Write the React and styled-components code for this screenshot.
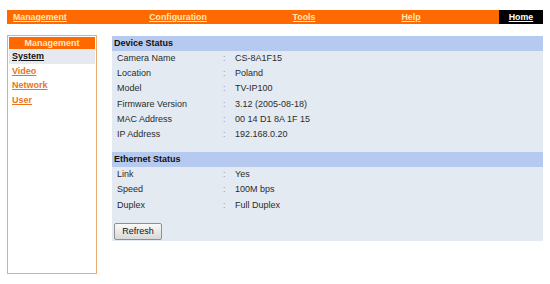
import React from "react";
import styled, { createGlobalStyle } from "styled-components";

const Global = createGlobalStyle`
  html, body { margin: 0; padding: 0; background: #fff; }
  body { font-family: "Liberation Sans", Arial, sans-serif; font-size: 9px; color: #333; }
`;

const Page = styled.div`
  width: 536px;
  padding: 10px 7px 0 7px;
`;

const TopBar = styled.nav`
  display: grid;
  grid-template-columns: 100px 142px 110px 104px 36px 44px;
  height: 14px;
  background: #ff6a00;
`;

const TopCell = styled.div`
  display: flex;
  align-items: center;
  justify-content: ${(p) => (p.$left ? "flex-start" : "center")};
  padding-left: ${(p) => (p.$left ? "6px" : "0")};
  background: ${(p) => (p.$dark ? "#000" : "transparent")};
`;

const TopLink = styled.a`
  font-weight: bold;
  font-size: 8.8px;
  color: ${(p) => (p.$dark ? "#fff" : "#ffe8b0")};
  text-decoration: underline;
  line-height: 14px;
`;

const Content = styled.div`
  display: flex;
  gap: 15px;
  margin-top: 11px;
`;

const Sidebar = styled.aside`
  box-sizing: border-box;
  width: 90px;
  height: 239px;
  border: 1px solid #e8ad72;
  padding: 1px;
`;

const SideHead = styled.div`
  background: #ff6a00;
  color: #ffe8c8;
  font-weight: bold;
  text-align: center;
  height: 12px;
  line-height: 12px;
`;

const SideItem = styled.a`
  display: block;
  height: 14.6px;
  line-height: 14.6px;
  padding-left: 3px;
  font-weight: bold;
  text-decoration: underline;
  color: ${(p) => (p.$active ? "#111" : "#e8741e")};
  background: ${(p) => (p.$active ? "#e6eaf0" : "transparent")};
`;

const Main = styled.main`
  width: 431px;
  margin-top: 1px;
  background: #e4eaf2;
  align-self: flex-start;
  padding-bottom: 1px;
`;

const SectionHead = styled.div`
  background: #b6c9ee;
  color: #111;
  font-weight: bold;
  height: 15px;
  line-height: 15px;
  padding-left: 2px;
`;

const Row = styled.div`
  display: grid;
  grid-template-columns: 106px 12px 1fr;
  height: 15.2px;
  line-height: 15.2px;
  padding-left: 5px;
  color: #2a2a2a;
`;

const Colon = styled.span`
  color: #999;
`;

const Spacer = styled.div`
  height: ${(p) => p.$h}px;
`;

const Button = styled.button`
  margin: 0 0 0 2px;
  width: 48px;
  height: 17px;
  font-family: "Liberation Sans", Arial, sans-serif;
  font-size: 9px;
  color: #111;
  border: 1px solid #8f8f8f;
  border-radius: 2px;
  background: linear-gradient(#fafafa, #d8d8d8);
  padding: 0;
`;

const device = [
  ["Camera Name", "CS-8A1F15"],
  ["Location", "Poland"],
  ["Model", "TV-IP100"],
  ["Firmware Version", "3.12 (2005-08-18)"],
  ["MAC Address", "00 14 D1 8A 1F 15"],
  ["IP Address", "192.168.0.20"],
];

const ether = [
  ["Link", "Yes"],
  ["Speed", "100M bps"],
  ["Duplex", "Full Duplex"],
];

export default function App() {
  return (
    <>
      <Global />
      <Page>
        <TopBar>
          <TopCell $left><TopLink>Management</TopLink></TopCell>
          <TopCell><TopLink>Configuration</TopLink></TopCell>
          <TopCell><TopLink>Tools</TopLink></TopCell>
          <TopCell><TopLink>Help</TopLink></TopCell>
          <TopCell />
          <TopCell $dark><TopLink $dark>Home</TopLink></TopCell>
        </TopBar>
        <Content>
          <Sidebar>
            <SideHead>Management</SideHead>
            <SideItem $active>System</SideItem>
            <SideItem>Video</SideItem>
            <SideItem>Network</SideItem>
            <SideItem>User</SideItem>
          </Sidebar>
          <Main>
            <SectionHead>Device Status</SectionHead>
            {device.map(([k, v]) => (
              <Row key={k}><span>{k}</span><Colon>:</Colon><span>{v}</span></Row>
            ))}
            <Spacer $h={10} />
            <SectionHead>Ethernet Status</SectionHead>
            {ether.map(([k, v]) => (
              <Row key={k}><span>{k}</span><Colon>:</Colon><span>{v}</span></Row>
            ))}
            <Spacer $h={10} />
            <Button>Refresh</Button>
          </Main>
        </Content>
      </Page>
    </>
  );
}
